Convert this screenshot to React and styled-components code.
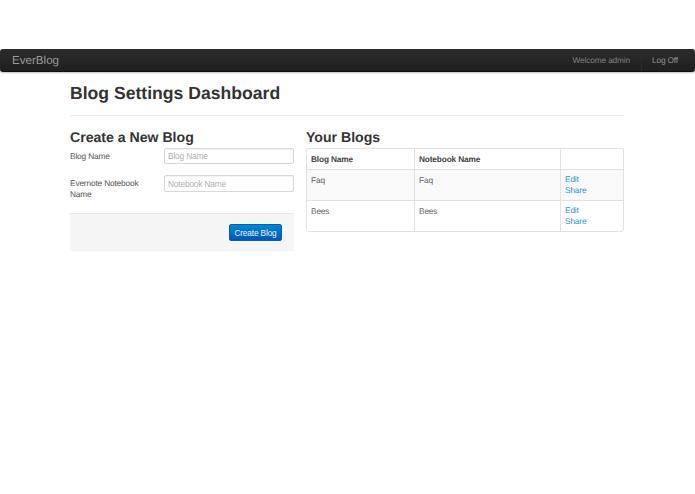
import React from 'react';
import styled, { createGlobalStyle } from 'styled-components';

const Global = createGlobalStyle`
  html, body { margin: 0; padding: 0; background: #fff; }
  body {
    font-family: "Liberation Sans", Arial, sans-serif;
    font-size: 8.3px;
    letter-spacing: -0.15px;
    line-height: 12px;
    color: #333;
    text-rendering: geometricPrecision;
  }
`;

const Page = styled.div`
  width: 695px;
  height: 494px;
  padding-top: 49px;
  box-sizing: border-box;
  overflow: hidden;
`;

const Navbar = styled.nav`
  height: 23px;
  display: flex;
  align-items: center;
  justify-content: space-between;
  background: linear-gradient(#2c2c2c, #1f1f1f);
  border-bottom: 1px solid #111;
  box-sizing: border-box;
  border-radius: 3px;
  box-shadow: 0 1px 2px rgba(0, 0, 0, 0.25);
`;

const Brand = styled.a`
  padding: 1px 0 0 12px;
  font-size: 11.6px;
  letter-spacing: 0;
  color: #999;
`;

const NavRight = styled.div`
  display: flex;
  align-items: center;
  height: 100%;
`;

const Welcome = styled.span`
  color: #808080;
  padding-right: 11px;
`;

const LogOff = styled.a`
  height: 100%;
  display: flex;
  align-items: center;
  color: #929292;
  padding: 0 17px 0 10px;
  border-left: 1px solid #2b2b2b;
`;

const Container = styled.main`
  width: 554px;
  margin-left: 70px;
`;

const PageHeader = styled.header`
  height: 43px;
  border-bottom: 1px solid #eee;
`;

const Title = styled.h1`
  margin: 0;
  padding-top: 8px;
  font-size: 17.6px;
  line-height: 26px;
  font-weight: bold;
  letter-spacing: 0;
  color: #333;
`;

const Columns = styled.div`
  display: flex;
  gap: 12px;
  padding-top: 11px;
`;

const LeftCol = styled.section`
  width: 224px;
`;

const RightCol = styled.section`
  width: 318px;
`;

const SectionTitle = styled.h2`
  margin: 0;
  font-size: 14.1px;
  line-height: 21px;
  font-weight: bold;
  letter-spacing: 0;
  color: #333;
`;

const Row = styled.div`
  display: flex;
  align-items: flex-start;
  margin-bottom: ${p => p.$gap}px;
`;

const Label = styled.label`
  width: 94px;
  box-sizing: border-box;
  padding: 3px 20px 0 0;
  line-height: 11px;
  color: #555;
`;

const Input = styled.input`
  width: 130px;
  height: ${p => p.$h}px;
  box-sizing: border-box;
  padding: 0 3px;
  font: 8.3px "Liberation Sans", Arial, sans-serif;
  letter-spacing: -0.15px;
  color: #555;
  border: 1px solid #d8d8d8;
  border-radius: 2px;
  box-shadow: inset 0 1px 1px rgba(0, 0, 0, 0.05);
  &::placeholder { color: #b0b0b0; opacity: 1; }
`;

const FormActions = styled.div`
  height: 38px;
  box-sizing: border-box;
  display: flex;
  align-items: center;
  justify-content: flex-end;
  padding-right: 12px;
  background: #f5f5f5;
  border-top: 1px solid #e8e8e8;
`;

const Button = styled.button`
  width: 53px;
  height: 17px;
  padding: 0;
  font: 8.3px "Liberation Sans", Arial, sans-serif;
  letter-spacing: -0.15px;
  color: #e8f2fa;
  background: linear-gradient(#0088cc, #0055bb);
  border: 1px solid #0060bb;
  border-radius: 2px;
`;

const Table = styled.table`
  width: 318px;
  table-layout: fixed;
  border-collapse: separate;
  border-spacing: 0;
  border: 1px solid #e2e2e2;
  border-radius: 2px;
`;

const Th = styled.th`
  height: 20px;
  box-sizing: border-box;
  padding: 0 4px;
  text-align: left;
  font-weight: bold;
  color: #444;
  border-left: ${p => (p.$first ? '0' : '1px solid #e2e2e2')};
  width: ${p => p.$w}px;
`;

const Td = styled.td`
  height: 31px;
  box-sizing: border-box;
  padding: 4px 4px 0;
  vertical-align: top;
  color: #666;
  border-top: 1px solid #e2e2e2;
  border-left: ${p => (p.$first ? '0' : '1px solid #e2e2e2')};
  background: ${p => (p.$odd ? '#f9f9f9' : '#fff')};
`;

const LinkItem = styled.a`
  display: block;
  line-height: 10.5px;
  color: #2a9ad4;
`;

const blogs = [
  { name: 'Faq', notebook: 'Faq' },
  { name: 'Bees', notebook: 'Bees' },
];

export default function App() {
  return (
    <Page>
      <Global />
      <Navbar>
        <Brand>EverBlog</Brand>
        <NavRight>
          <Welcome>Welcome admin</Welcome>
          <LogOff>Log Off</LogOff>
        </NavRight>
      </Navbar>
      <Container>
        <PageHeader>
          <Title>Blog Settings Dashboard</Title>
        </PageHeader>
        <Columns>
          <LeftCol>
            <SectionTitle>Create a New Blog</SectionTitle>
            <Row $gap={11}>
              <Label>Blog Name</Label>
              <Input $h={16} placeholder="Blog Name" />
            </Row>
            <Row $gap={13}>
              <Label>Evernote Notebook Name</Label>
              <Input $h={17} placeholder="Notebook Name" />
            </Row>
            <FormActions>
              <Button>Create Blog</Button>
            </FormActions>
          </LeftCol>
          <RightCol>
            <SectionTitle>Your Blogs</SectionTitle>
            <Table>
              <thead>
                <tr>
                  <Th $first $w={107}>Blog Name</Th>
                  <Th $w={146}>Notebook Name</Th>
                  <Th />
                </tr>
              </thead>
              <tbody>
                {blogs.map((b, i) => (
                  <tr key={b.name}>
                    <Td $first $odd={i % 2 === 0}>{b.name}</Td>
                    <Td $odd={i % 2 === 0}>{b.notebook}</Td>
                    <Td $odd={i % 2 === 0}>
                      <LinkItem>Edit</LinkItem>
                      <LinkItem>Share</LinkItem>
                    </Td>
                  </tr>
                ))}
              </tbody>
            </Table>
          </RightCol>
        </Columns>
      </Container>
    </Page>
  );
}
